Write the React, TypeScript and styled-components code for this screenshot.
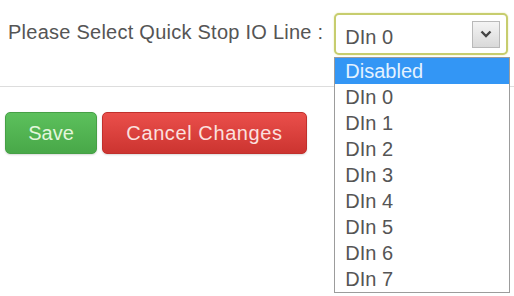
import styled, {createGlobalStyle} from 'styled-components';

const GlobalStyle = createGlobalStyle`
  body {
    margin: 0;
    background: #ffffff;
    font-family: 'Liberation Sans', Arial, sans-serif;
  }
`;

interface ButtonProps {
  $variant: 'success' | 'danger';
  $width: number;
}

interface OptionProps {
  $selected?: boolean;
}

const Page = styled.div`
  width: 514px;
  height: 296px;
  overflow: hidden;
  padding-top: 13px;
  box-sizing: border-box;
`;

const FieldRow = styled.div`
  display: flex;
  align-items: flex-start;
  gap: 11px;
  padding-left: 8px;
`;

const Label = styled.label`
  margin-top: 7px;
  font-size: 20px;
  line-height: 24px;
  letter-spacing: 0.25px;
  color: #555555;
  white-space: nowrap;
`;

const SelectWrapper = styled.div`
  position: relative;
`;

const SelectBox = styled.div`
  width: 174px;
  height: 42px;
  box-sizing: border-box;
  display: flex;
  align-items: center;
  justify-content: space-between;
  padding: 0 6px 0 9px;
  border: 2px solid #c7cd6e;
  border-radius: 5px;
  box-shadow: 0 0 2px #e2e6a8;
  background: #ffffff;
`;

const SelectValue = styled.span`
  padding-top: 5px;
  font-size: 20px;
  line-height: 24px;
  color: #555555;
`;

const ArrowButton = styled.span`
  width: 28px;
  height: 27px;
  box-sizing: border-box;
  display: flex;
  align-items: center;
  justify-content: center;
  border: 1px solid #b9b9b9;
  background: linear-gradient(#f4f4f4, #d9d9d9);
`;

const OptionList = styled.ul`
  position: absolute;
  top: 44px;
  left: 0;
  width: 176px;
  margin: 0;
  padding: 0;
  list-style: none;
  box-sizing: border-box;
  border: 1px solid #9c9c9c;
  background: #ffffff;
`;

const Option = styled.li<OptionProps>`
  height: 26px;
  padding-left: 10px;
  font-size: 20px;
  line-height: 26px;
  color: ${props => (props.$selected ? '#e4f2ff' : '#555555')};
  background: ${props => (props.$selected ? '#3396f5' : 'transparent')};
`;

const Divider = styled.hr`
  margin: 31px 0 0;
  border: 0;
  border-top: 1px solid #dddddd;
`;

const ButtonRow = styled.div`
  display: flex;
  gap: 5px;
  padding: 25px 0 0 5px;
`;

const Button = styled.button<ButtonProps>`
  width: ${props => props.$width}px;
  height: 42px;
  padding: 0;
  border-radius: 5px;
  font-family: inherit;
  font-size: 20px;
  letter-spacing: ${props => (props.$variant === 'danger' ? '0.6px' : '0')};
  color: ${props => (props.$variant === 'success' ? '#e3f6dc' : '#fbe0df')};
  border: 1px solid
    ${props => (props.$variant === 'success' ? '#46a046' : '#c1302c')};
  background: ${props =>
    props.$variant === 'success'
      ? 'linear-gradient(#5cc05c, #48a848)'
      : 'linear-gradient(#ea4f4b, #cc3430)'};
  box-shadow: 0 1px 2px rgba(0, 0, 0, 0.15);
`;

const options = ['Disabled', 'DIn 0', 'DIn 1', 'DIn 2', 'DIn 3', 'DIn 4', 'DIn 5', 'DIn 6', 'DIn 7'];

const Chevron = () => (
  <svg width="12" height="8" viewBox="0 0 12 8">
    <path d="M1.5 1.5 L6 6 L10.5 1.5" fill="none" stroke="#444" strokeWidth="2.4" />
  </svg>
);

export default function App() {
  return (
    <Page>
      <GlobalStyle />
      <FieldRow>
        <Label>Please Select Quick Stop IO Line :</Label>
        <SelectWrapper>
          <SelectBox>
            <SelectValue>DIn 0</SelectValue>
            <ArrowButton>
              <Chevron />
            </ArrowButton>
          </SelectBox>
          <OptionList>
            {options.map(option => (
              <Option key={option} $selected={option === 'Disabled'}>
                {option}
              </Option>
            ))}
          </OptionList>
        </SelectWrapper>
      </FieldRow>
      <Divider />
      <ButtonRow>
        <Button $variant="success" $width={92}>
          Save
        </Button>
        <Button $variant="danger" $width={205}>
          Cancel Changes
        </Button>
      </ButtonRow>
    </Page>
  );
}
